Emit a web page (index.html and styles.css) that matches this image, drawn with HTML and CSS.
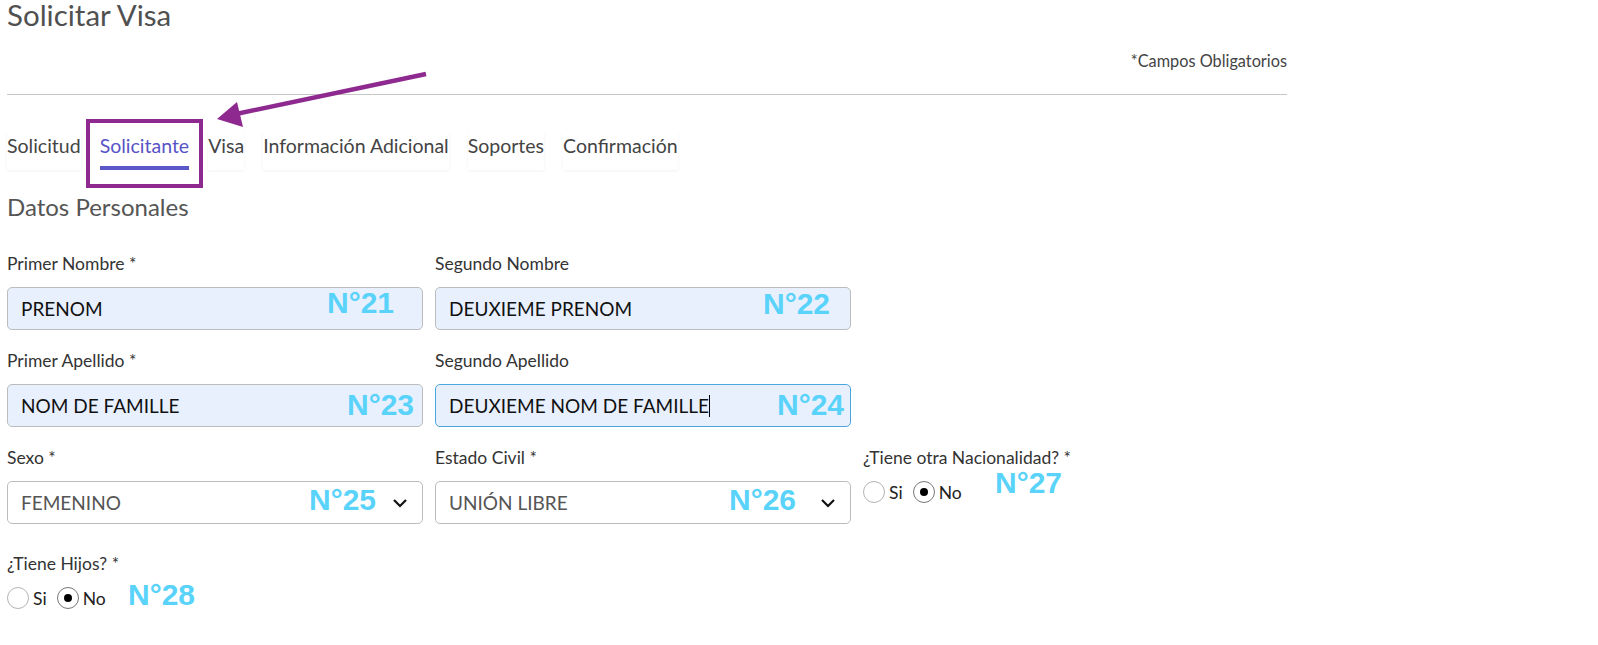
FILE: index.html
```html
<!DOCTYPE html>
<html lang="es">
<head>
    <meta charset="UTF-8">
    <meta name="viewport" content="width=device-width, initial-scale=1.0">
    <title>Solicitar Visa</title>
    <link rel="stylesheet" href="styles.css">
</head>
<body>
    <div class="page">
        <h1 class="title">Solicitar Visa</h1>
        <p class="required-note">*Campos Obligatorios</p>
        <hr class="divider">

        <ul class="tabs">
            <li class="tab">Solicitud</li>
            <li class="tab active">Solicitante</li>
            <li class="tab">Visa</li>
            <li class="tab">Información Adicional</li>
            <li class="tab">Soportes</li>
            <li class="tab">Confirmación</li>
        </ul>

        <h2 class="section-title">Datos Personales</h2>

        <div class="form-grid">
            <div class="field">
                <label>Primer Nombre *</label>
                <div class="input filled">PRENOM</div>
            </div>
            <div class="field">
                <label>Segundo Nombre</label>
                <div class="input filled">DEUXIEME PRENOM</div>
            </div>
            <div class="field"></div>

            <div class="field">
                <label>Primer Apellido *</label>
                <div class="input filled">NOM DE FAMILLE</div>
            </div>
            <div class="field">
                <label>Segundo Apellido</label>
                <div class="input filled focused">DEUXIEME NOM DE FAMILLE<span class="caret"></span></div>
            </div>
            <div class="field"></div>

            <div class="field">
                <label>Sexo *</label>
                <div class="input select">
                    <span>FEMENINO</span>
                    <svg class="chevron" width="16" height="10" viewBox="0 0 16 10"><path d="M2 2 L8 8 L14 2" fill="none" stroke="#111" stroke-width="2.2"/></svg>
                </div>
            </div>
            <div class="field">
                <label>Estado Civil *</label>
                <div class="input select">
                    <span>UNIÓN LIBRE</span>
                    <svg class="chevron" width="16" height="10" viewBox="0 0 16 10"><path d="M2 2 L8 8 L14 2" fill="none" stroke="#111" stroke-width="2.2"/></svg>
                </div>
            </div>
            <div class="field">
                <label>¿Tiene otra Nacionalidad? *</label>
                <div class="radios">
                    <span class="radio-option"><span class="radio"></span>Si</span>
                    <span class="radio-option"><span class="radio checked"></span>No</span>
                </div>
            </div>

            <div class="field spaced">
                <label>¿Tiene Hijos? *</label>
                <div class="radios">
                    <span class="radio-option"><span class="radio"></span>Si</span>
                    <span class="radio-option"><span class="radio checked"></span>No</span>
                </div>
            </div>
        </div>

        <!-- annotations drawn over the screenshot -->
        <svg class="arrow" width="440" height="130" viewBox="0 0 440 130">
            <line x1="426" y1="74" x2="236" y2="114" stroke="#8e2a8f" stroke-width="4.5"/>
            <polygon points="217,119 237,102 243,127" fill="#8e2a8f"/>
        </svg>
        <div class="highlight-box"></div>
        <span class="tag" style="left: 327px; top: 288px;">N°21</span>
        <span class="tag" style="left: 763px; top: 289px;">N°22</span>
        <span class="tag" style="left: 347px; top: 390px;">N°23</span>
        <span class="tag" style="left: 777px; top: 390px;">N°24</span>
        <span class="tag" style="left: 309px; top: 485px;">N°25</span>
        <span class="tag" style="left: 729px; top: 485px;">N°26</span>
        <span class="tag" style="left: 995px; top: 468px;">N°27</span>
        <span class="tag" style="left: 128px; top: 580px;">N°28</span>
    </div>
</body>
</html>
```

FILE: styles.css
```css
* {
    box-sizing: border-box;
}
body {
    margin: 0;
    background: #fff;
    font-family: 'Lato', 'Noto Sans', sans-serif;
    color: #333;
}
.page {
    position: relative;
    width: 1287px;
    padding-left: 7px;
}
.title {
    margin: 0;
    font-size: 29.5px;
    font-weight: 400;
    line-height: 30px;
    color: #505050;
}
.required-note {
    margin: 21px 0 0;
    text-align: right;
    font-size: 16.3px;
    line-height: 20px;
    color: #444;
}
.divider {
    margin: 23px 0 0;
    border: none;
    border-top: 1px solid #c6c6c6;
}
.tabs {
    display: flex;
    gap: 19px;
    list-style: none;
    margin: 37px 0 0;
    padding: 0;
}
.tab {
    padding: 2px 0 8px;
    font-size: 19.5px;
    line-height: 24px;
    color: #444;
    border-bottom: 4px solid transparent;
    box-shadow: 0 1px 3px rgba(0, 0, 0, 0.06);
}
.tab.active {
    color: #5753c6;
    border-bottom-color: #5b57c9;
    box-shadow: none;
}
.section-title {
    margin: 22px 0 0;
    font-size: 24px;
    font-weight: 400;
    line-height: 30px;
    color: #555;
}
.form-grid {
    display: grid;
    grid-template-columns: repeat(3, 416px);
    column-gap: 12px;
    row-gap: 21px;
    margin-top: 32px;
}
.field label {
    display: block;
    font-size: 17.5px;
    line-height: 20px;
    color: #333;
    margin-bottom: 13px;
}
.field.spaced {
    padding-top: 9px;
}
.input {
    display: flex;
    align-items: center;
    height: 43px;
    padding: 0 13px;
    border: 1px solid #bcbcbc;
    border-radius: 5px;
    font-size: 19px;
    color: #111;
}
.input.filled {
    background: #e8f0fe;
}
.input.focused {
    border-color: #4aa6dd;
}
.caret {
    display: inline-block;
    width: 1px;
    height: 22px;
    background: #000;
}
.input.select {
    justify-content: space-between;
    color: #555;
    padding-right: 14px;
}
.radios {
    display: flex;
    gap: 10px;
    margin-top: 13px;
}
.radio-option {
    display: inline-flex;
    align-items: center;
    gap: 4px;
    font-size: 17.5px;
    color: #222;
}
.radio {
    position: relative;
    width: 22px;
    height: 22px;
    border: 1px solid #b4b4b4;
    border-radius: 50%;
    background: #fff;
}
.radio.checked {
    border-color: #777;
}
.radio.checked::after {
    content: "";
    position: absolute;
    left: 6px;
    top: 6px;
    width: 8px;
    height: 8px;
    border-radius: 50%;
    background: #000;
}
.arrow {
    position: absolute;
    left: 0;
    top: 0;
}
.highlight-box {
    position: absolute;
    left: 86px;
    top: 119px;
    width: 117px;
    height: 69px;
    border: 4px solid #8e2a8f;
}
.tag {
    position: absolute;
    font-family: 'Liberation Sans', Arial, sans-serif;
    font-weight: 700;
    font-size: 30px;
    line-height: 30px;
    color: #5ad3fa;
}
```
